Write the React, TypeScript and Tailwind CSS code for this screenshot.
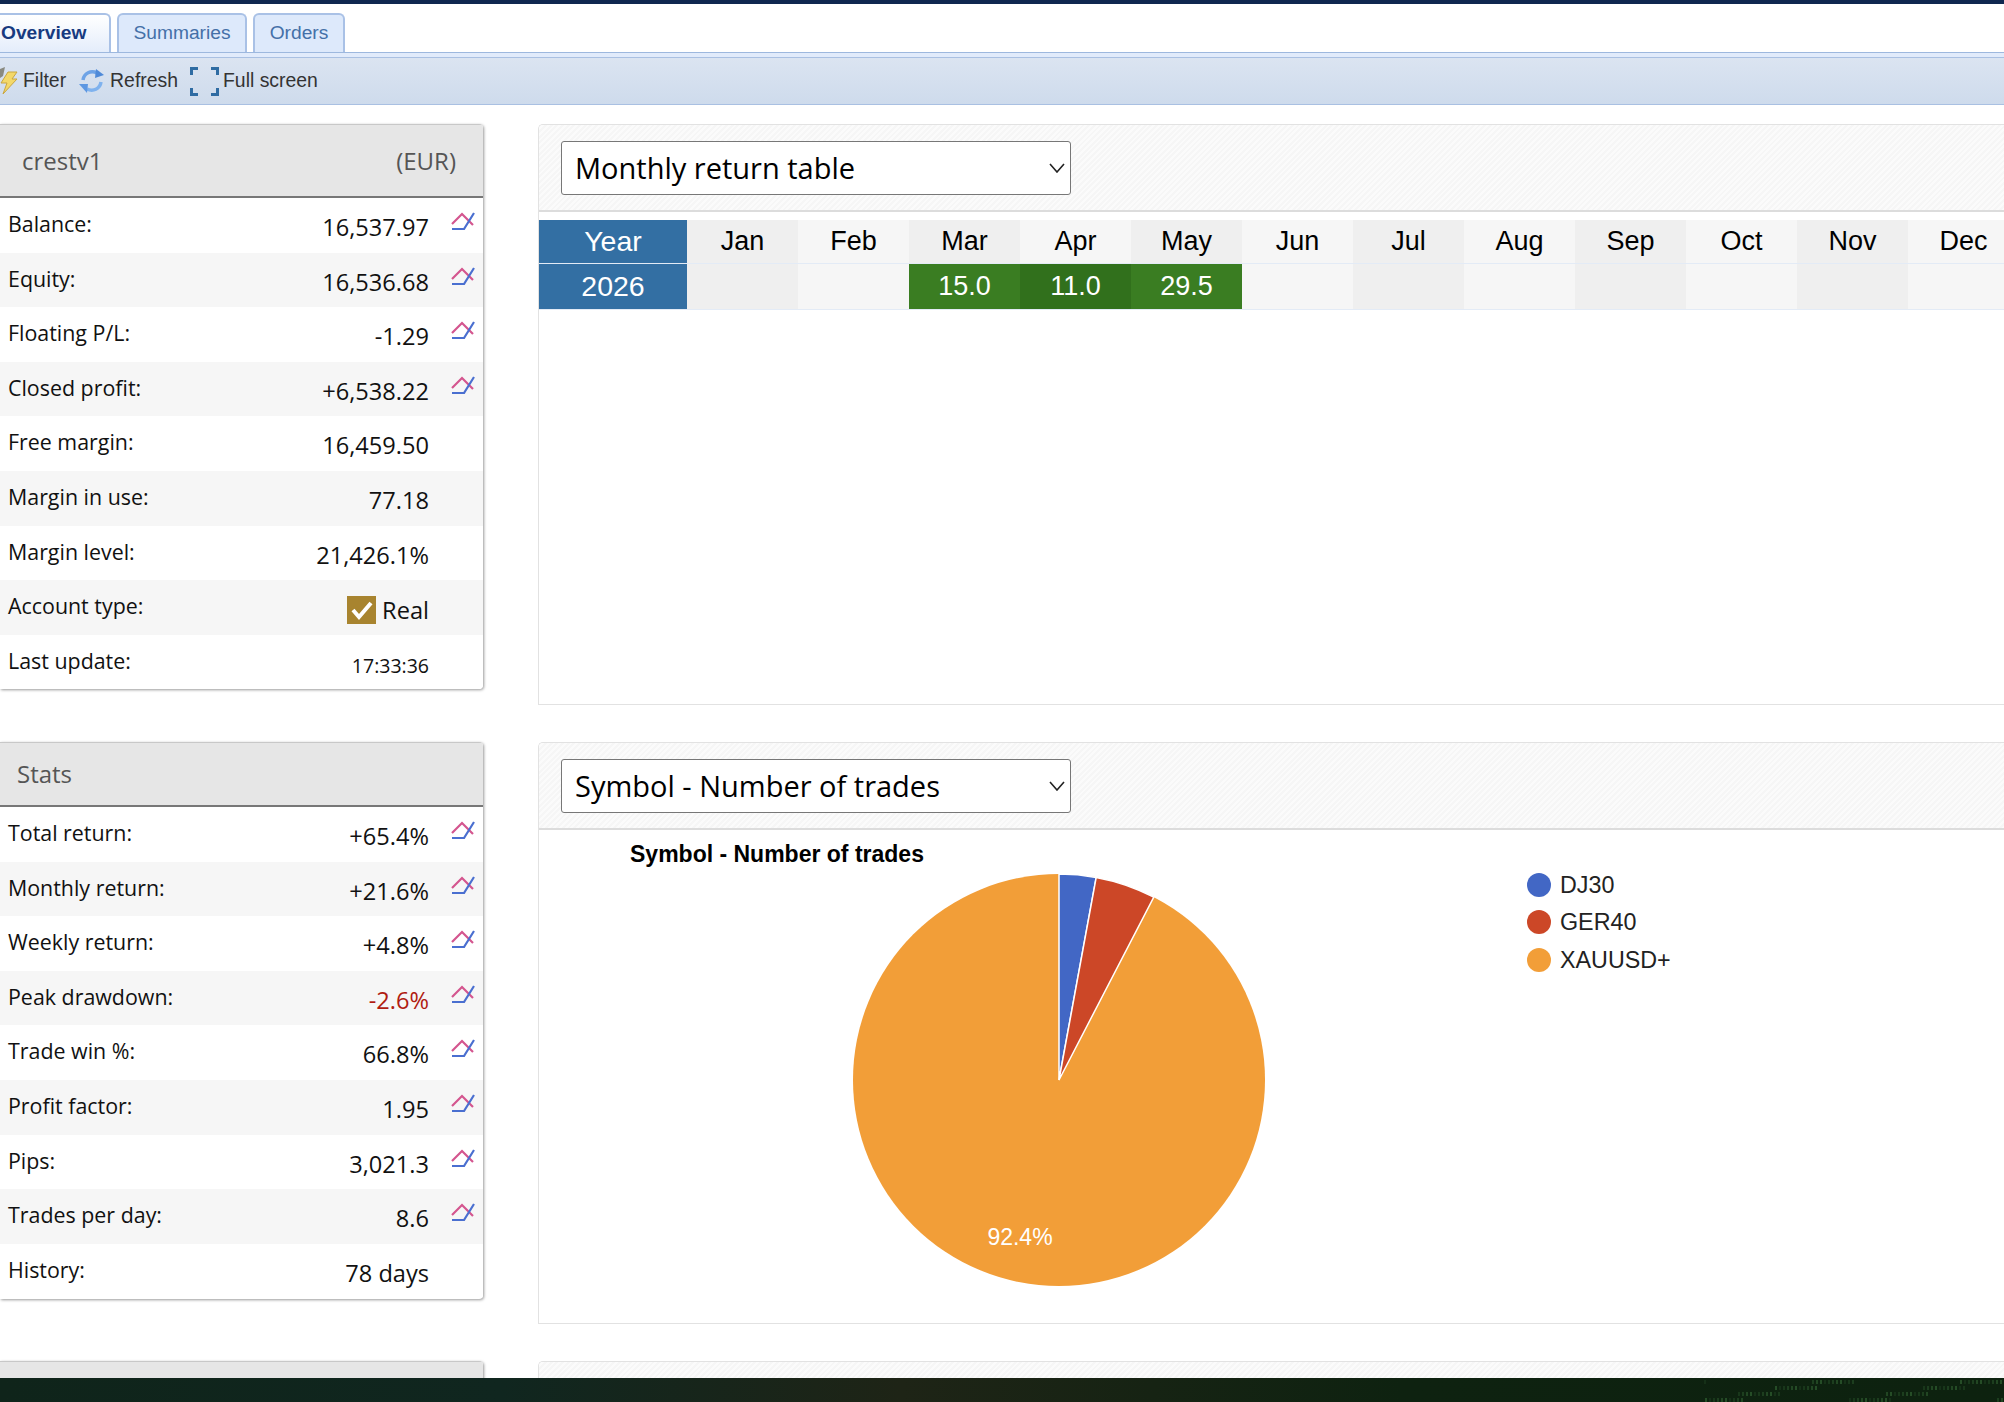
import type { ReactNode } from 'react';

const MONTHS = ['Jan', 'Feb', 'Mar', 'Apr', 'May', 'Jun', 'Jul', 'Aug', 'Sep', 'Oct', 'Nov', 'Dec'];

const RETURNS: Record<string, { value: string; bg: string }> = {
  Mar: { value: '15.0', bg: 'bg-[#3a7d22]' },
  Apr: { value: '11.0', bg: 'bg-[#31701c]' },
  May: { value: '29.5', bg: 'bg-[#3a7d22]' },
};

const ACCOUNT_ROWS = [
  { label: 'Balance:', value: '16,537.97', chart: true },
  { label: 'Equity:', value: '16,536.68', chart: true },
  { label: 'Floating P/L:', value: '-1.29', chart: true },
  { label: 'Closed profit:', value: '+6,538.22', chart: true },
  { label: 'Free margin:', value: '16,459.50' },
  { label: 'Margin in use:', value: '77.18' },
  { label: 'Margin level:', value: '21,426.1%' },
];

const STATS_ROWS = [
  { label: 'Total return:', value: '+65.4%', chart: true },
  { label: 'Monthly return:', value: '+21.6%', chart: true },
  { label: 'Weekly return:', value: '+4.8%', chart: true },
  { label: 'Peak drawdown:', value: '-2.6%', chart: true, red: true },
  { label: 'Trade win %:', value: '66.8%', chart: true },
  { label: 'Profit factor:', value: '1.95', chart: true },
  { label: 'Pips:', value: '3,021.3', chart: true },
  { label: 'Trades per day:', value: '8.6', chart: true },
  { label: 'History:', value: '78 days' },
];

function ChartIcon() {
  return (
    <svg width="24" height="18" viewBox="0 0 24 18" fill="none" className="block">
      <path d="M1 12 L11 2 L22 13" stroke="#d4568f" strokeWidth="2.2" />
      <path d="M1 17 L13 17 L23 1" stroke="#4a6fd0" strokeWidth="2.2" />
    </svg>
  );
}

function FilterIcon() {
  return (
    <svg width="22" height="30" viewBox="0 0 22 30" className="block">
      <path d="M0 3 L5 1 L3 10 L0 12 Z" fill="#8a8a80" />
      <path d="M8 6 L17 6 L12 13 L17 13 L3 28 L7 17 L1 17 Z" fill="#f3d869" stroke="#c9a640" strokeWidth="1" />
    </svg>
  );
}

function RefreshIcon() {
  return (
    <svg width="28" height="28" viewBox="0 0 28 28" fill="none" className="block">
      <path d="M5 13 C6 6 13 3 19 6" stroke="#6ea3e6" strokeWidth="3.5" />
      <path d="M18 2 L26 8 L17 11 Z" fill="#4f8ad8" />
      <path d="M23 15 C22 22 15 25 9 22" stroke="#7fb2ee" strokeWidth="3.5" />
      <path d="M10 17 L1 17 L9 26 Z" fill="#5c97e2" />
    </svg>
  );
}

function FullScreenIcon() {
  return (
    <svg width="29" height="29" viewBox="0 0 29 29" fill="none" className="block">
      <path d="M8 1.5 H1.5 V8 M21 1.5 H27.5 V8 M1.5 21 V27.5 H8 M27.5 21 V27.5 H21" stroke="#2f6ca3" strokeWidth="3" />
    </svg>
  );
}

function Row({ label, value, chart, red, index }: { label: string; value: ReactNode; chart?: boolean; red?: boolean; index: number }) {
  return (
    <div className={`flex h-[54.6px] items-start pl-2 ${index % 2 === 1 ? 'bg-[#f6f6f6]' : 'bg-white'}`}>
      <span className="mt-[13px] flex-1 text-[21.4px] leading-[26px] text-[#111]">{label}</span>
      <span className={`mt-[16px] text-[23.6px] leading-[26px] ${red ? 'text-[#b01c12]' : 'text-[#111]'}`}>{value}</span>
      <span className="ml-[22px] mt-[14px] w-[32px]">{chart && <ChartIcon />}</span>
    </div>
  );
}

function SidePanel({ header, children, className }: { header: ReactNode; children: ReactNode; className: string }) {
  return (
    <section className={`overflow-hidden rounded-r-[4px] bg-white shadow-[1px_1px_3px_rgba(0,0,0,0.4)] ${className}`}>
      {header}
      {children}
    </section>
  );
}

function ChartPanel({ title, className, children }: { title: string; className: string; children?: ReactNode }) {
  return (
    <section className={`overflow-hidden rounded-tl-[5px] border border-r-0 border-[#e2e2e2] bg-white ${className}`}>
      <div className="flex h-[87px] items-center border-b-2 border-[#dcdcdc] bg-[repeating-linear-gradient(135deg,#f6f6f6_0px,#f6f6f6_2px,#fbfbfb_2px,#fbfbfb_4px)] pl-[22px]">
        <div className="flex h-[54px] w-[510px] items-center justify-between rounded-[3px] border border-[#777] bg-white pl-[13px] pr-[5px] text-[29px] text-black">
          <span>{title}</span>
          <svg width="16" height="10" viewBox="0 0 16 10" fill="none" className="block">
            <path d="M1 1 L8 9 L15 1" stroke="#222" strokeWidth="1.6" />
          </svg>
        </div>
      </div>
      {children}
    </section>
  );
}

function ReturnTable() {
  return (
    <div className="mt-2 grid grid-cols-[148px_repeat(12,111px)] grid-rows-[44px_46px] font-['Liberation_Sans',sans-serif] text-[27px] text-black">
      <div className="flex items-center justify-center border-b border-[#e3ebf6] bg-[#336fa3] text-[28.5px] text-white">Year</div>
      {MONTHS.map((m, i) => (
        <div key={m} className={`flex items-center justify-center border-b border-[#e3ebf6] ${i % 2 === 0 ? 'bg-[#efefef]' : 'bg-[#f6f6f6]'}`}>
          {m}
        </div>
      ))}
      <div className="flex items-center justify-center border-b border-[#e3ebf6] bg-[#336fa3] text-[28.5px] text-white">2026</div>
      {MONTHS.map((m, i) => {
        const cell = RETURNS[m];
        return (
          <div
            key={m}
            className={`flex items-center justify-center border-b border-[#e3ebf6] ${cell ? `${cell.bg} text-white` : i % 2 === 0 ? 'bg-[#efefef]' : 'bg-[#f6f6f6]'}`}
          >
            {cell?.value}
          </div>
        );
      })}
    </div>
  );
}

function PieChart() {
  return (
    <svg width="1465" height="490" viewBox="0 0 1465 490" className="block font-['Liberation_Sans',sans-serif]">
      <text x="91" y="32" fontSize="23" fontWeight="700" fill="#000">Symbol - Number of trades</text>
      <circle cx="520" cy="250" r="206" fill="#f29e38" />
      <path d="M520 250 L520 44 A206 206 0 0 1 557.2 47.4 Z" fill="#4267c5" stroke="#fff" strokeWidth="1.5" />
      <path d="M520 250 L557.2 47.4 A206 206 0 0 1 614.8 67.1 Z" fill="#cc4727" stroke="#fff" strokeWidth="1.5" />
      <text x="481" y="415" textAnchor="middle" fontSize="23" fill="#fff">92.4%</text>
      <circle cx="1000" cy="55" r="12" fill="#4267c5" />
      <text x="1021" y="63" fontSize="23.3" fill="#222">DJ30</text>
      <circle cx="1000" cy="92" r="12" fill="#cc4727" />
      <text x="1021" y="100" fontSize="23.3" fill="#222">GER40</text>
      <circle cx="1000" cy="130" r="12" fill="#f29e38" />
      <text x="1021" y="138" fontSize="23.3" fill="#222">XAUUSD+</text>
    </svg>
  );
}

// little specks of the dark page background, bottom right
const SPECKS = Array.from({ length: 90 }, (_, i) => ({
  x: (i * 37) % 300,
  y: 2 + ((i * 7) % 4) * 6,
  o: 0.12 + ((i * 13) % 5) * 0.06,
}));

export default function App() {
  return (
    <div className="flex h-[1402px] w-[2004px] flex-col overflow-hidden bg-white font-['Open_Sans',sans-serif]">
      <div className="h-[4px] shrink-0 bg-[#0f2750]" />

      <nav className="flex h-[49px] shrink-0 items-end gap-[6px] border-b border-[#9db8de] font-['Liberation_Sans',sans-serif] text-[19.2px]">
        <div className="flex h-[39px] w-[111px] items-center rounded-tr-[6px] border-r-2 border-t-2 border-[#a9c1e6] bg-[linear-gradient(180deg,#ffffff,#e4edfb)] pl-px font-bold text-[#173a80]">
          Overview
        </div>
        <div className="flex h-[39px] w-[130px] items-center justify-center rounded-t-[6px] border-2 border-b-0 border-[#a9c1e6] bg-[#dde9fb] text-[#4470a8]">
          Summaries
        </div>
        <div className="flex h-[39px] w-[92px] items-center justify-center rounded-t-[6px] border-2 border-b-0 border-[#a9c1e6] bg-[#dde9fb] text-[#4470a8]">
          Orders
        </div>
      </nav>
      <div className="h-[4px] shrink-0 bg-[#e1ebfb]" />

      <div className="flex h-[48px] shrink-0 items-center border-y border-[#a9c0e2] bg-[linear-gradient(180deg,#dbe4f1,#cedbec)] font-['Liberation_Sans',sans-serif] text-[19.4px] text-[#333]">
        <span className="ml-0 mr-px"><FilterIcon /></span>
        <span>Filter</span>
        <span className="ml-[12px] mr-[4px]"><RefreshIcon /></span>
        <span>Refresh</span>
        <span className="ml-[12px] mr-[4px]"><FullScreenIcon /></span>
        <span>Full screen</span>
      </div>

      <main className="flex min-h-0 flex-1 gap-[55px] overflow-hidden pt-[19px]">
        <div className="flex w-[483px] shrink-0 flex-col">
          <SidePanel
            className="h-[565px] shrink-0"
            header={
              <div className="flex h-[74px] items-center justify-between border-b-2 border-t border-b-[#777] border-t-[#c8c8c8] bg-[#e6e6e6] pl-[22px] pr-[27px] text-[24px] text-[#555]">
                <span>crestv1</span>
                <span>(EUR)</span>
              </div>
            }
          >
            {ACCOUNT_ROWS.map((r, i) => (
              <Row key={r.label} index={i} {...r} />
            ))}
            <Row
              index={7}
              label="Account type:"
              value={
                <span className="flex items-center gap-[6px]">
                  <svg width="29" height="28" viewBox="0 0 29 28" className="block">
                    <rect width="29" height="28" fill="#a8842f" />
                    <path d="M6 14 L12 21 L24 7" fill="none" stroke="#fff" strokeWidth="4" />
                  </svg>
                  Real
                </span>
              }
            />
            <Row index={8} label="Last update:" value={<span className="text-[19.5px]">17:33:36</span>} />
          </SidePanel>

          <SidePanel
            className="mt-[53px] h-[557px] shrink-0"
            header={
              <div className="flex h-[65px] items-center border-b-2 border-t border-b-[#777] border-t-[#c8c8c8] bg-[#e6e6e6] pl-[17px] text-[24px] text-[#555]">
                Stats
              </div>
            }
          >
            {STATS_ROWS.map((r, i) => (
              <Row key={r.label} index={i} {...r} />
            ))}
          </SidePanel>

          <SidePanel
            className="mt-[62px] h-[40px] shrink-0"
            header={<div className="h-[40px] border-t border-[#c8c8c8] bg-[#e6e6e6]" />}
          >
            {null}
          </SidePanel>
        </div>

        <div className="flex w-[1500px] shrink-0 flex-col">
          <ChartPanel title="Monthly return table" className="h-[581px] shrink-0">
            <ReturnTable />
          </ChartPanel>
          <ChartPanel title="Symbol - Number of trades" className="mt-[37px] h-[582px] shrink-0">
            <PieChart />
          </ChartPanel>
          <ChartPanel title="" className="mt-[37px] h-[100px] shrink-0" />
        </div>
      </main>

      <footer className="flex h-[24px] shrink-0 justify-end bg-[linear-gradient(90deg,#0f241a_0%,#10261f_25%,#1e2416_45%,#0e2210_70%,#0d220f_100%)]">
        <svg width="300" height="24" viewBox="0 0 300 24" className="block">
          {SPECKS.map((s, i) => (
            <rect key={i} x={s.x} y={s.y} width="2" height="4" fill="#4f9a4f" opacity={s.o} />
          ))}
        </svg>
      </footer>
    </div>
  );
}
